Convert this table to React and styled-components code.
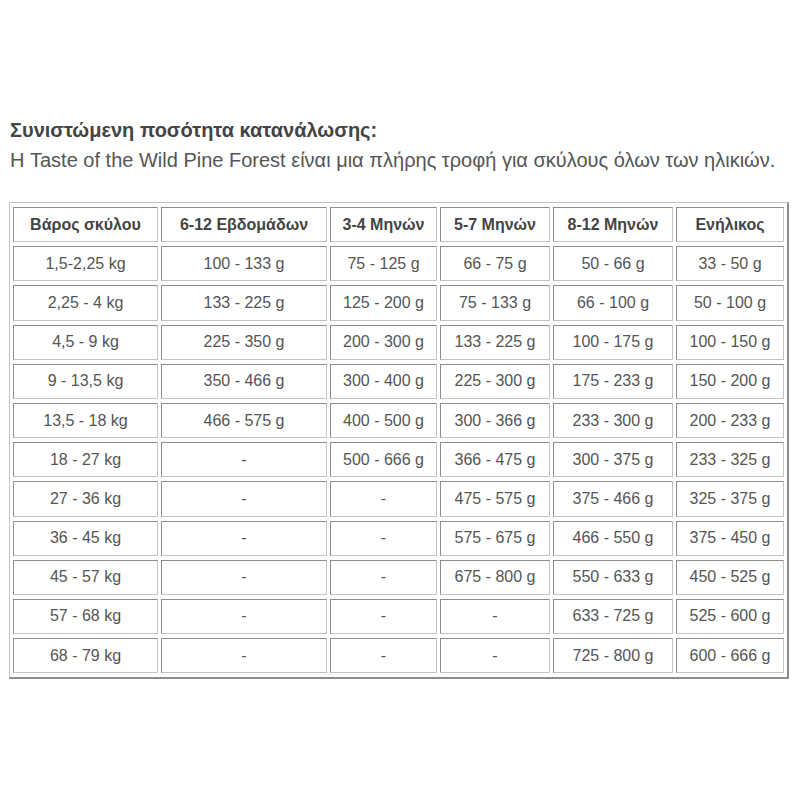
import styled, { createGlobalStyle } from 'styled-components';

const GlobalStyle = createGlobalStyle`
  body {
    margin: 0;
    background: #fff;
    font-family: "Liberation Sans", Arial, sans-serif;
  }
`;

const columns = [145, 166, 107, 110, 120, 108];

const headers = ['Βάρος σκύλου', '6-12 Εβδομάδων', '3-4 Μηνών', '5-7 Μηνών', '8-12 Μηνών', 'Ενήλικος'];

const rows = [
  ['1,5-2,25 kg', '100 - 133 g', '75 - 125 g', '66 - 75 g', '50 - 66 g', '33 - 50 g'],
  ['2,25 - 4 kg', '133 - 225 g', '125 - 200 g', '75 - 133 g', '66 - 100 g', '50 - 100 g'],
  ['4,5 - 9 kg', '225 - 350 g', '200 - 300 g', '133 - 225 g', '100 - 175 g', '100 - 150 g'],
  ['9 - 13,5 kg', '350 - 466 g', '300 - 400 g', '225 - 300 g', '175 - 233 g', '150 - 200 g'],
  ['13,5 - 18 kg', '466 - 575 g', '400 - 500 g', '300 - 366 g', '233 - 300 g', '200 - 233 g'],
  ['18 - 27 kg', '-', '500 - 666 g', '366 - 475 g', '300 - 375 g', '233 - 325 g'],
  ['27 - 36 kg', '-', '-', '475 - 575 g', '375 - 466 g', '325 - 375 g'],
  ['36 - 45 kg', '-', '-', '575 - 675 g', '466 - 550 g', '375 - 450 g'],
  ['45 - 57 kg', '-', '-', '675 - 800 g', '550 - 633 g', '450 - 525 g'],
  ['57 - 68 kg', '-', '-', '-', '633 - 725 g', '525 - 600 g'],
  ['68 - 79 kg', '-', '-', '-', '725 - 800 g', '600 - 666 g'],
];

const Page = styled.div`
  padding: 116px 10px 0 10px;
  color: #555;
`;

const Title = styled.h3`
  margin: 0;
  font-size: 20px;
  line-height: 29px;
  font-weight: bold;
  color: #444;
`;

const Intro = styled.p`
  margin: 0;
  font-size: 20px;
  line-height: 30px;
  color: #555;
`;

const Table = styled.table`
  margin-top: 27px;
  width: 778px;
  margin-left: -1px;
  table-layout: fixed;
  border-collapse: separate;
  border-spacing: 3px 4px;
  border-style: solid;
  border-width: 1px 2px 2px 1px;
  border-color: #c4c4c4 #8c8c8c #8c8c8c #c4c4c4;
`;

const Cell = styled.td`
  box-sizing: border-box;
  height: 35.2px;
  padding: 0 4px;
  text-align: center;
  vertical-align: middle;
  font-size: 16px;
  font-weight: ${p => (p.$head ? 'bold' : 'normal')};
  color: ${p => (p.$head ? '#444' : '#555')};
  border: 1px solid;
  border-color: #8c8c8c #c4c4c4 #c4c4c4 #8c8c8c;
  white-space: nowrap;
`;

export default function App() {
  return (
    <>
      <GlobalStyle />
      <Page>
        <Title>Συνιστώμενη ποσότητα κατανάλωσης:</Title>
        <Intro>Η Taste of the Wild Pine Forest είναι μια πλήρης τροφή για σκύλους όλων των ηλικιών.</Intro>
        <Table>
          <colgroup>
            {columns.map((w, i) => (
              <col key={i} style={{ width: w }} />
            ))}
          </colgroup>
          <thead>
            <tr>
              {headers.map(h => (
                <Cell as="th" $head key={h}>{h}</Cell>
              ))}
            </tr>
          </thead>
          <tbody>
            {rows.map((r, i) => (
              <tr key={i}>
                {r.map((c, j) => (
                  <Cell key={j}>{c}</Cell>
                ))}
              </tr>
            ))}
          </tbody>
        </Table>
      </Page>
    </>
  );
}
